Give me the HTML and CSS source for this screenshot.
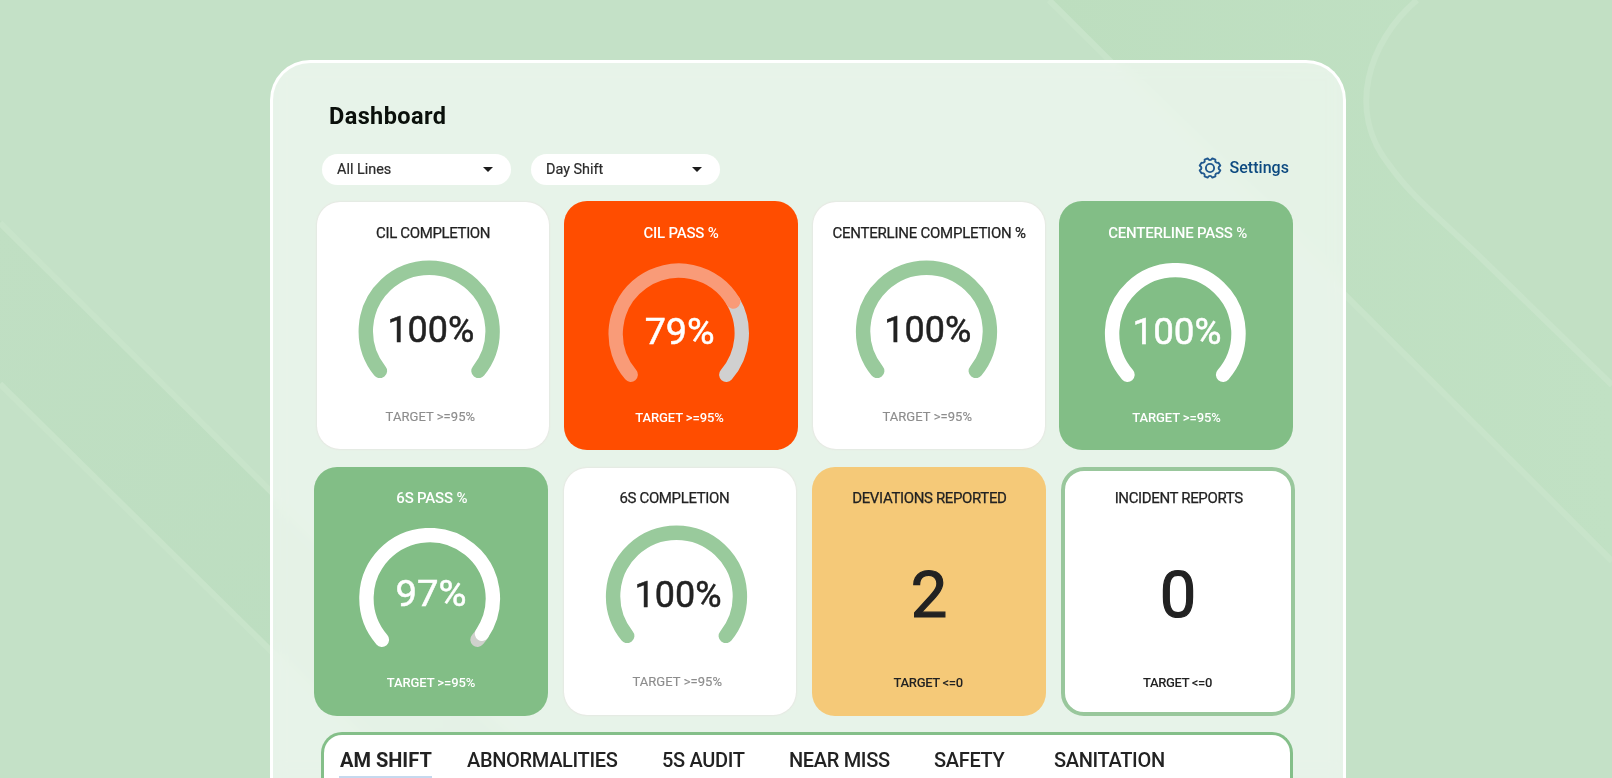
FILE: index.html
```html
<!DOCTYPE html>
<html lang="en">
<head>
<meta charset="utf-8">
<title>Dashboard</title>
<link rel="stylesheet" href="styles.css">
</head>
<body>
<svg class="backdrop" viewBox="0 0 1612 778" preserveAspectRatio="none" aria-hidden="true">
  <defs>
    <linearGradient id="bandR" x1="0" y1="0" x2="1" y2="0"><stop offset="0" stop-color="#bddebf"/><stop offset="1" stop-color="#c1e1c4"/></linearGradient>
    <linearGradient id="bandL" x1="0" y1="0" x2="1" y2="1"><stop offset="0" stop-color="#c0dfc3"/><stop offset="1" stop-color="#bbddbf"/></linearGradient>
  </defs>
  <path fill="url(#bandL)" d="M0 220L560 778H400L0 386Z"/>
  <path fill="url(#bandR)" d="M1049 0H1612V561Z"/>
  <path class="shape-inner" d="M1417 0C1368 42 1346 112 1390 166C1410 194 1430 210 1476 253L1612 385V0Z"/>
  <path class="shape-line" d="M0 223L560 778M0 384L400 778M1049 0L1612 561M1417 0C1368 42 1346 112 1390 166C1410 194 1430 210 1476 253L1612 385"/>
</svg>

<main class="panel">
  <h1 class="heading">Dashboard</h1>
  <div class="toolbar">
    <div class="select"><span>All Lines</span><i class="caret"></i></div>
    <div class="select"><span>Day Shift</span><i class="caret"></i></div>
    <a class="settings">
      <svg class="gear" viewBox="0 0 24 22" aria-hidden="true"><path d="M9.6 1.4Q12 4.8 14.4 1.4L17.4 2.6Q16.6 6.2 20.5 5.8L22.3 8.6Q18.8 11 22.3 13.4L20.5 16.2Q16.6 15.8 17.4 19.4L14.4 20.6Q12 17.2 9.6 20.6L6.6 19.4Q7.4 15.8 3.5 16.2L1.7 13.4Q5.2 11 1.7 8.6L3.5 5.8Q7.4 6.2 6.6 2.6Z"/><circle cx="12" cy="11" r="4.1"/></svg>
      <span>Settings</span>
    </a>
  </div>

  <section class="cards cards-first">
    <article class="card plain cil-completion">
      <h2>CIL COMPLETION</h2>
      <svg class="gauge" viewBox="0 0 150 118"><path class="arc green" d="M25.7 111A63.4 63.4 0 1 1 124.3 111"/><text class="value dark" x="76.7" y="81.7" textLength="87" lengthAdjust="spacingAndGlyphs">100%</text></svg>
      <p>TARGET &gt;=95%</p>
    </article>
    <article class="card red">
      <h2>CIL PASS %</h2>
      <svg class="gauge" viewBox="0 0 150 120"><path class="arc grey" d="M129.7 38.5A63.2 63.2 0 0 1 122.8 111.7"/><path class="arc salmon" d="M27.2 111.7A63.2 63.2 0 1 1 129.7 38.5"/><text class="value" x="76.2" y="81" textLength="70" lengthAdjust="spacingAndGlyphs">79%</text></svg>
      <p>TARGET &gt;=95%</p>
    </article>
    <article class="card plain line-completion">
      <h2>CENTERLINE COMPLETION %</h2>
      <svg class="gauge" viewBox="0 0 150 118"><path class="arc green" d="M25.7 111A63.4 63.4 0 1 1 124.3 111"/><text class="value dark" x="76.3" y="81.7" textLength="87" lengthAdjust="spacingAndGlyphs">100%</text></svg>
      <p>TARGET &gt;=95%</p>
    </article>
    <article class="card solid line-pass">
      <h2>CENTERLINE PASS %</h2>
      <svg class="gauge" viewBox="0 0 150 120"><path class="arc white" d="M27.2 111.7A63.2 63.2 0 1 1 122.8 111.7"/><text class="value" x="76.7" y="81" textLength="89" lengthAdjust="spacingAndGlyphs">100%</text></svg>
      <p>TARGET &gt;=95%</p>
    </article>
  </section>

  <section class="cards cards-second">
    <article class="card solid six-pass">
      <h2>6S PASS %</h2>
      <svg class="gauge" viewBox="0 0 150 120"><path class="arc silver" d="M127.3 105.7A63.2 63.2 0 0 1 122.8 111.7"/><path class="arc white" d="M27.2 111.7A63.2 63.2 0 1 1 127.3 105.7"/><text class="value" x="76.3" y="78" textLength="71" lengthAdjust="spacingAndGlyphs">97%</text></svg>
      <p>TARGET &gt;=95%</p>
    </article>
    <article class="card plain six-completion">
      <h2>6S COMPLETION</h2>
      <svg class="gauge" viewBox="0 0 150 118"><path class="arc green" d="M25.7 111A63.4 63.4 0 1 1 124.3 111"/><text class="value dark" x="76.5" y="81.7" textLength="87" lengthAdjust="spacingAndGlyphs">100%</text></svg>
      <p>TARGET &gt;=95%</p>
    </article>
    <article class="card amber">
      <h2>DEVIATIONS REPORTED</h2>
      <strong class="count">2</strong>
      <p>TARGET &lt;=0</p>
    </article>
    <article class="card outlined">
      <h2>INCIDENT REPORTS</h2>
      <strong class="count">0</strong>
      <p>TARGET &lt;=0</p>
    </article>
  </section>

  <nav class="tabs">
    <a class="tab active">AM SHIFT</a>
    <a class="tab t-abn">ABNORMALITIES</a>
    <a class="tab t-audit">5S AUDIT</a>
    <a class="tab t-miss">NEAR MISS</a>
    <a class="tab t-safe">SAFETY</a>
    <a class="tab t-san">SANITATION</a>
  </nav>
</main>
</body>
</html>
```
FILE: styles.css
```css
* { box-sizing: border-box; }

body {
  display: flow-root;
  margin: 0;
  height: 778px;
  overflow: hidden;
  background: #c4e1c7;
  font-family: Roboto, "Liberation Sans", sans-serif;
  color: #222;
}

.backdrop { position: absolute; inset: 0; width: 1612px; height: 778px; z-index: -1; }
.shape-inner { fill: #c2e0c4; }
.shape-line { fill: none; stroke: #c8e4ca; stroke-width: 6; }

.panel {
  width: 1076px;
  height: 718px;
  margin: 60px 0 0 270px;
  overflow: hidden;
  border: 3px solid #fff;
  border-bottom: 0;
  border-radius: 40px 40px 0 0;
  background: rgba(255, 255, 255, .6);
  backdrop-filter: blur(8px);
}

.heading {
  margin: 38px 0 0 56px;
  font-size: 23.5px;
  line-height: 30px;
  font-weight: 700;
  letter-spacing: .4px;
  color: #0a100b;
}

.toolbar { display: flex; align-items: center; margin: 23px 0 0 49px; height: 31px; }
.select {
  display: flex;
  align-items: center;
  justify-content: space-between;
  width: 189px;
  height: 31px;
  margin-right: 20px;
  padding: 0 18.5px 0 15px;
  border-radius: 16px;
  background: #fff;
  font-size: 14.4px;
  color: #2c2c2c;
  -webkit-text-stroke: .2px;
}
.caret { border: 5.2px solid transparent; border-top: 5.4px solid #1c1c1c; border-bottom: 0; }

.settings {
  display: flex;
  align-items: center;
  gap: 7px;
  margin: 0 54px 4px auto;
  font-size: 16px;
  font-weight: 500;
  letter-spacing: .05px;
  color: #0d4a80;
}
.gear { width: 24px; height: 22px; fill: none; stroke: #21598f; stroke-width: 1.9; stroke-linejoin: round; }

.cards { display: flex; align-items: flex-start; height: 249px; }
.cards-first { margin: 16px 0 0 41px; }
.cards-second { margin: 17px 0 0 41px; }

/* --title, --dial and --goal shift a card's parts off its centre line */
.card {
  --title: 0px;
  --dial: 0px;
  --goal: 0px;
  display: flex;
  flex-direction: column;
  align-items: center;
  flex: none;
  width: 234px;
  height: 249px;
  padding-top: 22px;
  border-radius: 23px;
  color: #fff;
}
.card h2 {
  margin: 0;
  font-size: 15px;
  line-height: 20px;
  font-weight: 400;
  white-space: nowrap;
  letter-spacing: -.36px;
  -webkit-text-stroke: .25px;
  transform: translateX(var(--title));
}
.card p { margin: 0; font-size: 13px; line-height: 16px; letter-spacing: .05px; transform: translateX(var(--goal)); }

.plain { width: 231.7px; height: 246.5px; margin-top: 1.2px; padding-top: 20.8px; background: #fff; color: #222; box-shadow: 0 0 2px rgba(220, 200, 205, .7); }
.plain p { margin-top: 31px; color: #8d8d8d; -webkit-text-stroke: .15px; }
.red { --dial: -2.5px; --goal: -1.5px; background: #ff4d00; }
.solid { background: #82be86; }
.amber { --title: .4px; --goal: -.8px; background: #f5c978; color: #222; }
.outlined { --title: .7px; --goal: -.5px; border: 4px solid #99c79c; background: #fff; color: #222; }
.red h2, .solid h2 { font-weight: 500; letter-spacing: -.2px; -webkit-text-stroke: 0; }
.red p, .solid p { margin-top: 27px; font-weight: 500; letter-spacing: -.1px; }
.amber p, .outlined p { font-weight: 500; letter-spacing: -.35px; }

.cil-completion { --dial: -3.8px; --goal: -2.8px; margin-left: 3.3px; }
.line-completion { --dial: -2.5px; --goal: -1.9px; margin-left: 15.3px; }
.line-completion h2 { letter-spacing: -.24px; }
.line-pass { --title: 1.7px; --dial: -.7px; --goal: .5px; margin-left: 14px; }
.six-pass { --title: .8px; --dial: -1.3px; }
.six-completion { --title: -5.7px; --dial: -3.5px; --goal: -2.9px; margin-left: 16.3px; }
.red { margin-left: 15px; }
.amber { margin-left: 16px; }
.outlined { margin-left: 15px; }

.cards-second .card { padding-top: 21px; }
.cards-second .plain { padding-top: 20px; }
.cards-second .outlined { padding-top: 17px; }

.gauge { width: 150px; height: 120px; margin-top: 20px; transform: translateX(var(--dial)); }
.plain .gauge { height: 118px; margin-top: 17px; }
.arc { fill: none; stroke-width: 14.4; stroke-linecap: round; }
.green { stroke: #99ca9c; }
.white { stroke: #fff; }
.salmon { stroke: #f99b78; }
.grey { stroke: #d0d0d0; }
.silver { stroke: #cfd1cc; }
.value { font-size: 36px; fill: #fff; stroke: #fff; stroke-width: .5px; text-anchor: middle; }
.dark { fill: #222; stroke: #222; }

.count { height: 167px; padding-top: 49px; font-size: 65px; line-height: 76px; font-weight: 400; -webkit-text-stroke: 1.2px; }

.tabs {
  display: flex;
  width: 972px;
  height: 70px;
  margin: 16px 0 0 47.5px;
  padding: 9px 0 0 15.5px;
  border: 3px solid #84bf89;
  border-bottom: 0;
  border-radius: 21px 21px 0 0;
  background: #fff;
}
.tab { height: 35px; font-size: 20px; line-height: 32px; font-weight: 500; letter-spacing: -.33px; white-space: nowrap; }
.active { width: 93px; padding-left: 1px; font-weight: 700; letter-spacing: 0; border-bottom: 3px solid #c5d9ee; }
.t-abn { margin-left: 35px; width: 195px; }
.t-audit { width: 127px; }
.t-miss { width: 145px; }
.t-safe { width: 120px; }
```
